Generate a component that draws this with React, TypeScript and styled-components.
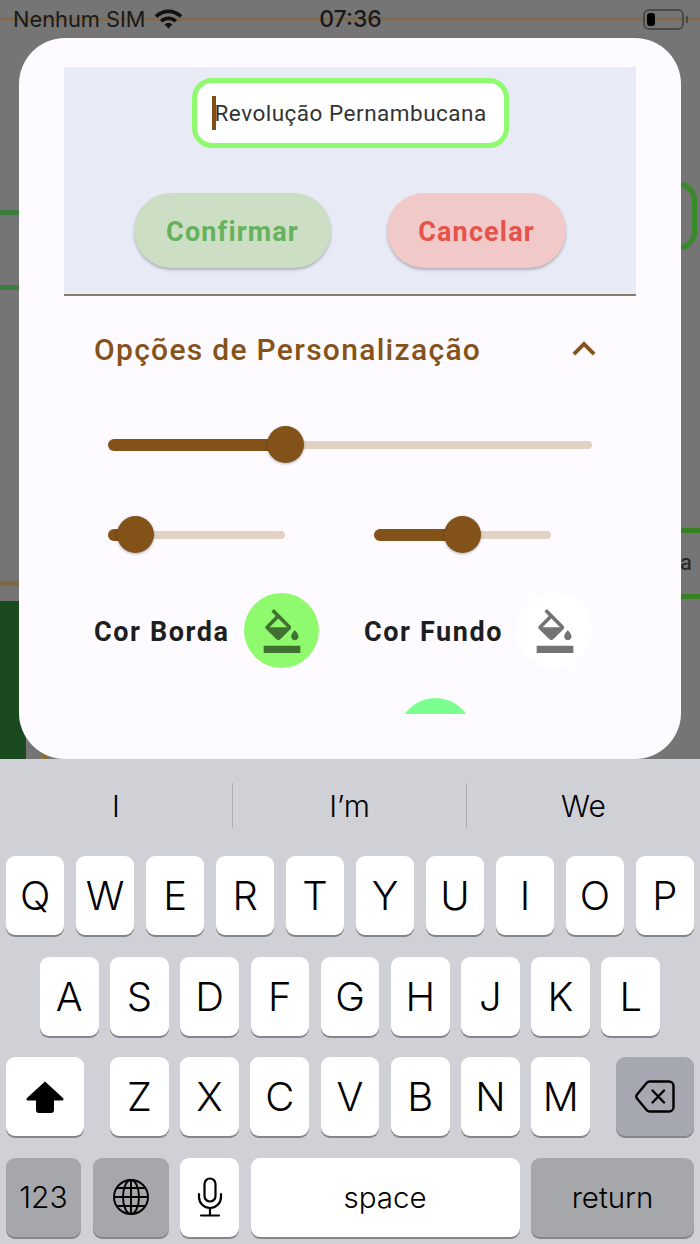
import React from "react";
import styled, { createGlobalStyle } from "styled-components";
import { MdFormatColorFill, MdKeyboardArrowUp } from "react-icons/md";

const Global = createGlobalStyle`
  html, body { margin: 0; padding: 0; background: #d0d1d6; }
  * { box-sizing: border-box; }
`;

const Screen = styled.div`
  width: 700px;
  height: 1244px;
  display: flex;
  flex-direction: column;
  overflow: hidden;
  font-family: Roboto, "Liberation Sans", sans-serif;
`;

const Stage = styled.div`
  position: relative;
  height: 759px;
  background: #757575;
  display: flex;
  flex-direction: column;
  overflow: hidden;
  flex: none;
`;

const Backdrop = styled.div<{ $x: number; $y: number; $w: number; $h: number; $c: string }>`
  position: absolute;
  left: ${(p) => p.$x}px;
  top: ${(p) => p.$y}px;
  width: ${(p) => p.$w}px;
  height: ${(p) => p.$h}px;
  background: ${(p) => p.$c};
`;

const BackdropField = styled.div`
  position: absolute;
  left: 640px;
  top: 182px;
  width: 57px;
  height: 68px;
  border: 5px solid #378a28;
  border-radius: 18px;
`;

const BackdropLetter = styled.span`
  position: absolute;
  left: 680px;
  top: 550px;
  font-size: 22px;
  line-height: 26px;
  color: #222;
`;

const StatusBar = styled.div`
  position: relative;
  height: 38px;
  flex: none;
  display: grid;
  grid-template-columns: 1fr auto 1fr;
  align-items: center;
  padding: 0 12px 0 13px;
  color: #191919;
`;

const Carrier = styled.div`
  display: flex;
  align-items: center;
  gap: 9px;
  font-family: Inter, Roboto, sans-serif;
  font-size: 21.8px;
`;

const Clock = styled.div`
  font-family: Inter, Roboto, sans-serif;
  font-weight: 500;
  font-size: 23px;
`;

const Battery = styled.div`
  justify-self: end;
  display: flex;
  align-items: center;
  gap: 2px;
`;

const BatteryShell = styled.div`
  width: 41px;
  height: 21px;
  border: 2px solid #4a4a4a;
  border-radius: 6px;
  padding: 2px;
`;

const BatteryLevel = styled.div`
  width: 8px;
  height: 100%;
  background: #000;
  border-radius: 3px;
`;

const BatteryNub = styled.div`
  width: 2px;
  height: 7px;
  background: #4a4a4a;
`;

const Dialog = styled.div`
  position: relative;
  flex: 1;
  margin: 0 19px;
  padding: 29px 45px 0;
  background: #fdfbff;
  border-radius: 46px;
  display: flex;
  flex-direction: column;
`;

const NamePanel = styled.div`
  height: 229px;
  flex: none;
  background: #e8eaf6;
  border-bottom: 2px solid #8c7a68;
  display: flex;
  flex-direction: column;
  align-items: center;
  padding-top: 11px;
`;

const NameField = styled.div`
  width: 317px;
  height: 70px;
  background: #fff;
  border: 5px solid #90fa6e;
  border-radius: 20px;
  display: flex;
  align-items: center;
  padding-left: 15px;
  font-size: 22.5px;
  letter-spacing: 0.5px;
  color: #333;
`;

const Caret = styled.span`
  width: 4px;
  height: 34px;
  margin-right: -1px;
  background: #7f4f17;
  flex: none;
`;

const PanelActions = styled.div`
  margin-top: 45px;
  display: flex;
  gap: 56px;
`;

const ActionButton = styled.button<{ $bg: string; $fg: string; $w: number }>`
  width: ${(p) => p.$w}px;
  height: 75px;
  border: 0;
  border-radius: 38px;
  padding: 2px 0 0;
  background: ${(p) => p.$bg};
  color: ${(p) => p.$fg};
  font-family: Roboto, sans-serif;
  font-size: 27px;
  font-weight: 700;
  letter-spacing: 1.15px;
  box-shadow: 0 2px 3px rgba(0, 0, 0, 0.25);
`;

const SectionHeader = styled.div`
  height: 106px;
  flex: none;
  display: flex;
  align-items: center;
  justify-content: space-between;
  padding: 0 28px 0 30px;
  color: #85521a;
`;

const SectionTitle = styled.span`
  font-size: 30px;
  font-weight: 500;
  letter-spacing: 1.3px;
`;

const Chevron = styled(MdKeyboardArrowUp)`
  font-size: 46px;
  margin-right: 1px;
`;

const SliderStack = styled.div`
  display: flex;
  flex-direction: column;
  gap: 53px;
  padding: 24px 44px 0;
`;

const SliderPair = styled.div`
  display: flex;
  justify-content: space-between;
  padding-right: 41px;
`;

const SliderBody = styled.div<{ $w: number }>`
  position: relative;
  width: ${(p) => p.$w}px;
  height: 37px;
  display: flex;
  align-items: center;
`;

const SliderTrack = styled.div`
  width: 100%;
  height: 8px;
  border-radius: 4px;
  background: #e1d2c1;
`;

const SliderFill = styled.div`
  position: absolute;
  left: 0;
  top: 12.5px;
  height: 12px;
  border-radius: 6px;
  background: #825219;
`;

const SliderThumb = styled.div`
  position: absolute;
  top: 0;
  width: 37px;
  height: 37px;
  margin-left: -18.5px;
  border-radius: 50%;
  background: #825219;
  box-shadow: 0 1px 3px rgba(0, 0, 0, 0.3);
`;

const ColorRow = styled.div`
  display: flex;
  gap: 45px;
  padding: 40px 0 0 30px;
`;

const ColorOption = styled.div<{ $w: number }>`
  width: ${(p) => p.$w}px;
  display: flex;
  align-items: center;
  justify-content: space-between;
`;

const ColorLabel = styled.span`
  padding-top: 3px;
  font-size: 27px;
  font-weight: 700;
  letter-spacing: 1.6px;
  color: #1e1e1e;
`;

const ColorSwatch = styled.div<{ $bg: string }>`
  width: 75px;
  height: 75px;
  border-radius: 50%;
  background: ${(p) => p.$bg};
  color: rgba(0, 0, 0, 0.55);
  display: flex;
  align-items: center;
  justify-content: center;
  font-size: 44px;
`;

const PaletteClip = styled.div`
  height: 16px;
  margin: 30px 0 0 340px;
  width: 62px;
  overflow: hidden;
`;

const PaletteDot = styled.div`
  width: 75px;
  height: 75px;
  margin-left: -6.5px;
  border-radius: 50%;
  background: #7bff91;
`;

const Keyboard = styled.div`
  flex: 1;
  background: #d0d1d6;
  color: #000;
  font-family: Inter, "Liberation Sans", sans-serif;
`;

const Suggestions = styled.div`
  display: grid;
  grid-template-columns: 232px 234px 234px;
  height: 97px;
  padding-top: 24px;
`;

const Suggestion = styled.div<{ $divider?: boolean }>`
  height: 45px;
  display: flex;
  align-items: center;
  justify-content: center;
  font-size: 30px;
  font-weight: 300;
  border-left: ${(p) => (p.$divider ? "1.5px solid #aeb0b5" : "0")};
`;

const KeyRows = styled.div`
  display: flex;
  flex-direction: column;
  gap: 21.67px;
`;

const KeyRow = styled.div<{ $inset?: number }>`
  height: 79px;
  display: flex;
  gap: 11.5px;
  padding: 0 ${(p) => p.$inset ?? 6}px;
`;

const Key = styled.div<{ $w?: number; $dark?: string; $size?: number; $after?: number; $before?: number }>`
  flex: ${(p) => (p.$w ? `0 0 ${p.$w}px` : "1 1 0")};
  margin: 0 ${(p) => p.$after ?? 0}px 0 ${(p) => p.$before ?? 0}px;
  display: flex;
  align-items: center;
  justify-content: center;
  border-radius: 9px;
  background: ${(p) => p.$dark ?? "#fff"};
  box-shadow: 0 2px 0 #85868a;
  font-size: ${(p) => p.$size ?? 40}px;
  font-weight: 300;
`;

const Wifi = () => (
  <svg width="27" height="20" viewBox="0 0 27 20" aria-hidden="true">
    <g fill="none" stroke="#111" strokeWidth="3.6">
      <path d="M1 7.6A17.5 17.5 0 0 1 26 7.6" />
      <path d="M6.2 12.3A10.2 10.2 0 0 1 20.8 12.3" />
    </g>
    <path d="M13.5 19.5L9.6 15.4A5.6 5.6 0 0 1 17.4 15.4Z" fill="#111" />
  </svg>
);

const ShiftGlyph = () => (
  <svg width="38" height="32" viewBox="0 0 38 32" aria-hidden="true">
    <path d="M19 0.5L37 17Q38.5 19.5 36 19.5H28V29Q28 32 25 32H13Q10 32 10 29V19.5H2Q-0.5 19.5 1 17Z" fill="#000" />
  </svg>
);

const BackspaceGlyph = () => (
  <svg width="40" height="33" viewBox="0 0 40 33" aria-hidden="true" fill="none" stroke="#000" strokeWidth="2.4" strokeLinejoin="round" strokeLinecap="round">
    <path d="M14.5 1.5H34A4.5 4.5 0 0 1 38.5 6V27A4.5 4.5 0 0 1 34 31.5H14.5A3.5 3.5 0 0 1 12 30.4L2 18.5Q0.6 16.5 2 14.5L12 2.6A3.5 3.5 0 0 1 14.5 1.5Z" />
    <path d="M17.5 10.5L29 22.5M29 10.5L17.5 22.5" />
  </svg>
);

const GlobeGlyph = () => (
  <svg width="38" height="38" viewBox="0 0 38 38" aria-hidden="true" fill="none" stroke="#000" strokeWidth="1.9">
    <circle cx="19" cy="19" r="17" />
    <ellipse cx="19" cy="19" rx="8" ry="17" />
    <path d="M19 2V36M2 19H36M5 10H33M5 28H33" />
  </svg>
);

const MicGlyph = () => (
  <svg width="26" height="40" viewBox="0 0 26 40" aria-hidden="true" fill="none" stroke="#000" strokeWidth="2.2" strokeLinecap="round">
    <rect x="7.5" y="1.5" width="11" height="23" rx="5.5" />
    <path d="M2 17V20A11 11 0 0 0 24 20V17" />
    <path d="M13 31V38M4 38.5H22" />
  </svg>
);

const Slider = ({ width, value }: { width: number; value: number }) => (
  <SliderBody $w={width}>
    <SliderTrack />
    <SliderFill style={{ width: value }} />
    <SliderThumb style={{ left: value }} />
  </SliderBody>
);

const rowOne = ["Q", "W", "E", "R", "T", "Y", "U", "I", "O", "P"];
const rowTwo = ["A", "S", "D", "F", "G", "H", "J", "K", "L"];
const rowThree = ["Z", "X", "C", "V", "B", "N", "M"];

export default function App() {
  return (
    <Screen>
      <Global />
      <Stage>
        <Backdrop $x={0} $y={17} $w={700} $h={4} $c="#7c6c55" />
        <Backdrop $x={0} $y={210} $w={20} $h={5} $c="#3f7a40" />
        <Backdrop $x={0} $y={285} $w={20} $h={5} $c="#3f7a40" />
        <BackdropField />
        <Backdrop $x={680} $y={528} $w={20} $h={5} $c="#35801f" />
        <Backdrop $x={680} $y={594} $w={20} $h={5} $c="#35801f" />
        <BackdropLetter>a</BackdropLetter>
        <Backdrop $x={0} $y={581} $w={20} $h={5} $c="#7d6a40" />
        <Backdrop $x={0} $y={601} $w={26} $h={158} $c="#1b4a20" />
        <Backdrop $x={42} $y={749} $w={6} $h={10} $c="#8a7030" />
        <StatusBar>
          <Carrier>
            Nenhum SIM
            <Wifi />
          </Carrier>
          <Clock>07:36</Clock>
          <Battery>
            <BatteryShell>
              <BatteryLevel />
            </BatteryShell>
            <BatteryNub />
          </Battery>
        </StatusBar>
        <Dialog>
          <NamePanel>
            <NameField>
              <Caret />
              Revolução Pernambucana
            </NameField>
            <PanelActions>
              <ActionButton $bg="#ccdfc4" $fg="#66b25c" $w={197}>Confirmar</ActionButton>
              <ActionButton $bg="#f2c9c9" $fg="#e5534a" $w={179}>Cancelar</ActionButton>
            </PanelActions>
          </NamePanel>
          <SectionHeader>
            <SectionTitle>Opções de Personalização</SectionTitle>
            <Chevron />
          </SectionHeader>
          <SliderStack>
            <Slider width={484} value={177} />
            <SliderPair>
              <Slider width={177} value={27} />
              <Slider width={177} value={88} />
            </SliderPair>
          </SliderStack>
          <ColorRow>
            <ColorOption $w={225}>
              <ColorLabel>Cor Borda</ColorLabel>
              <ColorSwatch $bg="#90fa6e"><MdFormatColorFill /></ColorSwatch>
            </ColorOption>
            <ColorOption $w={228}>
              <ColorLabel>Cor Fundo</ColorLabel>
              <ColorSwatch $bg="#ffffff"><MdFormatColorFill /></ColorSwatch>
            </ColorOption>
          </ColorRow>
          <PaletteClip>
            <PaletteDot />
          </PaletteClip>
        </Dialog>
      </Stage>
      <Keyboard>
        <Suggestions>
          <Suggestion>I</Suggestion>
          <Suggestion $divider>I’m</Suggestion>
          <Suggestion $divider>We</Suggestion>
        </Suggestions>
        <KeyRows>
          <KeyRow>
            {rowOne.map((k) => <Key key={k}>{k}</Key>)}
          </KeyRow>
          <KeyRow $inset={40}>
            {rowTwo.map((k) => <Key key={k}>{k}</Key>)}
          </KeyRow>
          <KeyRow>
            <Key $w={78} $after={14.5}><ShiftGlyph /></Key>
            {rowThree.map((k) => <Key key={k}>{k}</Key>)}
            <Key $w={78} $before={14.5} $dark="#a5a8b0"><BackspaceGlyph /></Key>
          </KeyRow>
          <KeyRow>
            <Key $w={75} $dark="#a6a7ab" $size={30}>123</Key>
            <Key $w={76} $dark="#a6a7ab"><GlobeGlyph /></Key>
            <Key $w={59}><MicGlyph /></Key>
            <Key $size={29.5}>space</Key>
            <Key $w={163} $dark="#a6a7ab" $size={29.5}>return</Key>
          </KeyRow>
        </KeyRows>
      </Keyboard>
    </Screen>
  );
}
